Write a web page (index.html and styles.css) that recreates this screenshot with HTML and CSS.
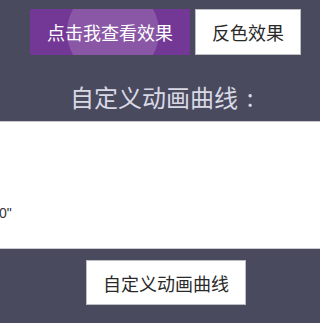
FILE: index.html
```html
<!DOCTYPE html>
<html lang="zh">
<head>
<meta charset="utf-8">
<link rel="stylesheet" href="styles.css">
</head>
<body>
<div class="top">
  <button class="btn btn-purple"><span class="ripple"></span><span class="label">点击我查看效果</span></button>
  <button class="btn btn-white">反色效果</button>
</div>
<h2 class="title">自定义动画曲线<span class="colon">:</span></h2>
<div class="panel"><div class="code">0"</div></div>
<div class="bottom">
  <button class="btn btn-white btn-wide">自定义动画曲线</button>
</div>
</body>
</html>
```
FILE: styles.css
```css
html, body {
  margin: 0;
  padding: 0;
  background: #4a4a5f;
  font-family: "Noto Sans CJK SC", "Noto Sans", sans-serif;
}
.top {
  display: flex;
  gap: 5px;
  padding: 9px 0 0 30px;
}
.btn {
  box-sizing: border-box;
  height: 46px;
  margin: 0;
  padding: 0;
  font-family: "Noto Sans CJK SC", "Noto Sans", sans-serif;
  font-size: 18px;
  line-height: 1;
  border: none;
  display: flex;
  align-items: center;
  justify-content: center;
}
.btn-purple {
  position: relative;
  overflow: hidden;
  width: 160px;
  background: #733795;
  color: #ffffff;
}
.ripple {
  position: absolute;
  left: 37px;
  top: -23px;
  width: 92px;
  height: 92px;
  border-radius: 50%;
  background: #8a57a7;
}
.label {
  position: relative;
}
.btn-white {
  width: 106px;
  background: #ffffff;
  color: #2a2a2a;
  border: 1px solid #bdbdc4;
}
.title {
  margin: 0;
  padding: 0;
  height: 66px;
  box-sizing: border-box;
  padding-top: 27px;
  font-weight: normal;
  font-size: 24px;
  line-height: 30px;
  text-align: center;
  color: #d9d9e6;
  padding-left: 12px;
}
.colon {
  display: inline-block;
  width: 1em;
  text-align: center;
}
.panel {
  box-sizing: border-box;
  height: 128px;
  background: #ffffff;
  border-top: 1px solid #c9c9cf;
  border-bottom: 1px solid #c9c9cf;
  padding-top: 81px;
}
.code {
  font-family: "Liberation Sans", sans-serif;
  font-size: 14px;
  line-height: 20px;
  color: #333;
  margin-left: -1px;
}
.bottom {
  padding: 11px 0 0 86px;
}
.btn-wide {
  width: 160px;
  height: 45px;
}
```
